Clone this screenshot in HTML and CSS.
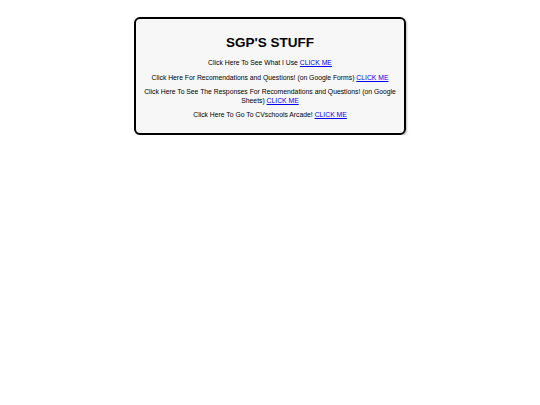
FILE: index.html
```html
<!DOCTYPE html>
<html lang="en">
<head>
    <meta charset="UTF-8">
    <meta name="viewport" content="width=device-width, initial-scale=1.0">
    <title>SGP'S STUFF</title>
    <link rel="stylesheet" href="styles.css">
</head>
<body>
    <div class="container">
        <h1>SGP'S STUFF</h1>
        <p>Click Here To See What I Use <a href="#">CLICK ME</a></p>
        <p>Click Here For Recomendations and Questions! (on Google Forms) <a href="#">CLICK ME</a></p>
        <p>Click Here To See The Responses For Recomendations and Questions! (on Google Sheets) <a href="#">CLICK ME</a></p>
        <p>Click Here To Go To CVschools Arcade! <a href="#">CLICK ME</a></p>
    </div>
</body>
</html>
```

FILE: styles.css
```css
body {
    margin: 0;
    padding-top: 17px;
    font-family: 'Liberation Sans', Arial, sans-serif;
    background: #ffffff;
}
.container {
    width: 272px;
    margin: 0 auto;
    box-sizing: border-box;
    background: #f7f7f7;
    border: 2px solid #000;
    border-radius: 6px;
    box-shadow: 1px 1px 2px rgba(0, 0, 0, 0.25);
    padding: 10px 6px 7px;
    text-align: center;
}
h1 {
    font-size: 13.5px;
    line-height: 15px;
    margin: 6px 0 9px;
}
p {
    font-size: 6.8px;
    line-height: 8.5px;
    margin: 6px 0;
}
a {
    color: #0000ee;
}
```
